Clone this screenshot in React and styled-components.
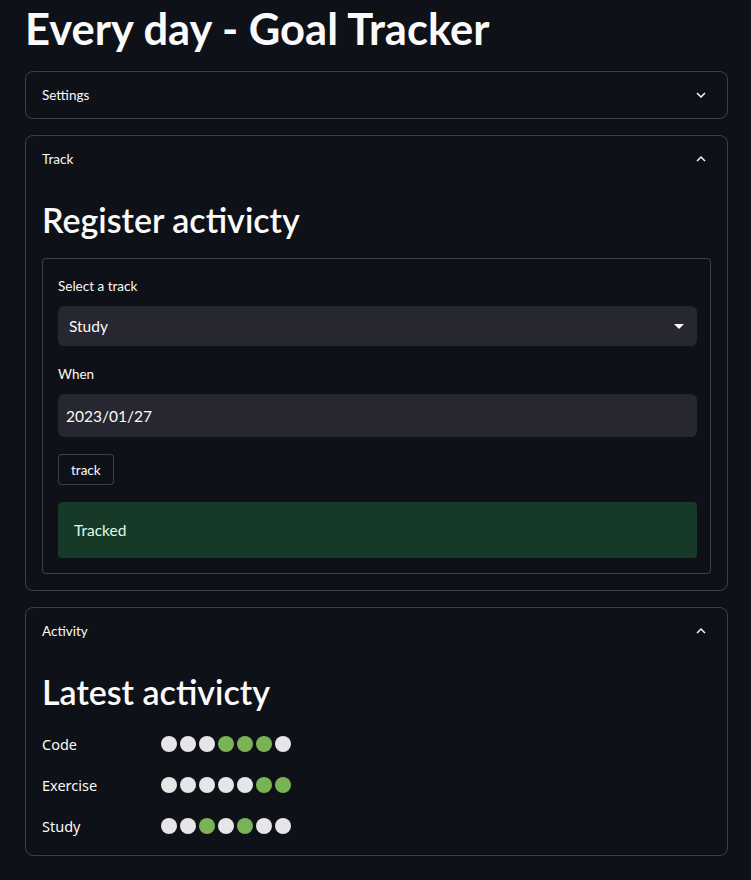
import styled, { createGlobalStyle } from 'styled-components';

const GlobalStyle = createGlobalStyle`
  html, body {
    margin: 0;
    padding: 0;
    background: #0e1117;
  }
  body {
    font-family: "Source Sans Pro", Lato, "Noto Sans", sans-serif;
    color: #fafafa;
  }
`;

const tracks = [
  { name: 'Code', days: [0, 0, 0, 1, 1, 1, 0] },
  { name: 'Exercise', days: [0, 0, 0, 0, 0, 1, 1] },
  { name: 'Study', days: [0, 0, 1, 0, 1, 0, 0] },
];

const Chevron = ({ up }) => (
  <svg width="18" height="18" viewBox="0 0 24 24" fill="#fafafa">
    {up ? (
      <path d="M7.41 15.41L12 10.83l4.59 4.58L18 14l-6-6-6 6z" />
    ) : (
      <path d="M7.41 8.59L12 13.17l4.59-4.58L18 10l-6 6-6-6 1.41-1.41z" />
    )}
  </svg>
);

const Expander = ({ label, open, children }) => (
  <ExpanderBox>
    <ExpanderHeader>
      <span>{label}</span>
      <Chevron up={open} />
    </ExpanderHeader>
    {open && <ExpanderBody>{children}</ExpanderBody>}
  </ExpanderBox>
);

export default function App() {
  return (
    <>
      <GlobalStyle />
      <Main>
        <Title>Every day - Goal Tracker</Title>
        <Expander label="Settings" />
        <Expander label="Track" open>
          <Heading>Register activicty</Heading>
          <Form>
            <Label>Select a track</Label>
            <Select>
              <span>Study</span>
              <svg width="24" height="24" viewBox="0 0 24 24" fill="#fafafa">
                <path d="M7 10l5 5 5-5z" />
              </svg>
            </Select>
            <Label>When</Label>
            <DateInput>2023/01/27</DateInput>
            <Button type="button">track</Button>
            <Success>Tracked</Success>
          </Form>
        </Expander>
        <Expander label="Activity" open>
          <Heading>Latest activicty</Heading>
          <Table>
            {tracks.map((t) => (
              <Row key={t.name}>
                <RowLabel>{t.name}</RowLabel>
                <Dots>
                  {t.days.map((d, i) => (
                    <Dot key={i} $done={d === 1} />
                  ))}
                </Dots>
              </Row>
            ))}
          </Table>
        </Expander>
      </Main>
    </>
  );
}

const Main = styled.div`
  width: 703px;
  padding: 0 0 25px 25px;
  display: flex;
  flex-direction: column;
  gap: 16px;
`;

const Title = styled.h1`
  margin: 0;
  padding: 2px 0 1px;
  font-size: 43.5px;
  line-height: 52px;
  font-weight: 700;
  color: #fafafa;
`;

const ExpanderBox = styled.div`
  border: 1px solid rgba(250, 250, 250, 0.2);
  border-radius: 8px;
`;

const ExpanderHeader = styled.div`
  height: 46px;
  display: flex;
  align-items: center;
  justify-content: space-between;
  padding: 0 17px 0 16px;
  font-size: 13.5px;
  color: #fafafa;
`;

const ExpanderBody = styled.div`
  padding: 4px 16px 16px;
`;

const Heading = styled.h2`
  margin: 0;
  padding: 12px 0 16px;
  font-size: 34px;
  line-height: 44px;
  font-weight: 600;
  color: #fafafa;
`;

const Form = styled.div`
  border: 1px solid rgba(250, 250, 250, 0.2);
  border-radius: 4px;
  padding: 16px 13px 15px 15px;
  display: flex;
  flex-direction: column;
  align-items: flex-start;
`;

const Label = styled.div`
  font-size: 13.5px;
  line-height: 22px;
  margin-bottom: 9px;
  color: #fafafa;
`;

const Select = styled.div`
  box-sizing: border-box;
  width: 100%;
  height: 40px;
  background: #262730;
  border-radius: 6px;
  display: flex;
  align-items: center;
  justify-content: space-between;
  padding: 0 6px 0 11px;
  font-size: 15.5px;
  margin-bottom: 17px;
`;

const DateInput = styled.div`
  box-sizing: border-box;
  width: 100%;
  height: 43px;
  background: #262730;
  border-radius: 6px;
  display: flex;
  align-items: center;
  padding: 0 8px;
  font-size: 15.5px;
  margin-bottom: 17px;
`;

const Button = styled.button`
  height: 31px;
  padding: 0 12px;
  background: #0e1117;
  border: 1px solid rgba(250, 250, 250, 0.2);
  border-radius: 4px;
  color: #fafafa;
  font-family: inherit;
  font-size: 13.5px;
  margin-bottom: 17px;
`;

const Success = styled.div`
  box-sizing: border-box;
  width: 100%;
  height: 56px;
  background: #173928;
  border-radius: 4px;
  display: flex;
  align-items: center;
  padding: 0 16px;
  font-size: 15.5px;
  color: #dffde9;
`;

const Table = styled.div`
  display: flex;
  flex-direction: column;
  gap: 20px;
  padding-top: 3px;
  padding-bottom: 3px;
  font-family: "Noto Sans", "Open Sans", sans-serif;
`;

const Row = styled.div`
  display: flex;
  align-items: center;
  height: 21px;
`;

const RowLabel = styled.div`
  width: 119px;
  font-size: 14.5px;
  color: #fafafa;
`;

const Dots = styled.div`
  display: flex;
  gap: 3px;
`;

const Dot = styled.span`
  width: 16px;
  height: 16px;
  border-radius: 50%;
  background: ${(p) => (p.$done ? '#7ab356' : '#e6e6e8')};
`;
